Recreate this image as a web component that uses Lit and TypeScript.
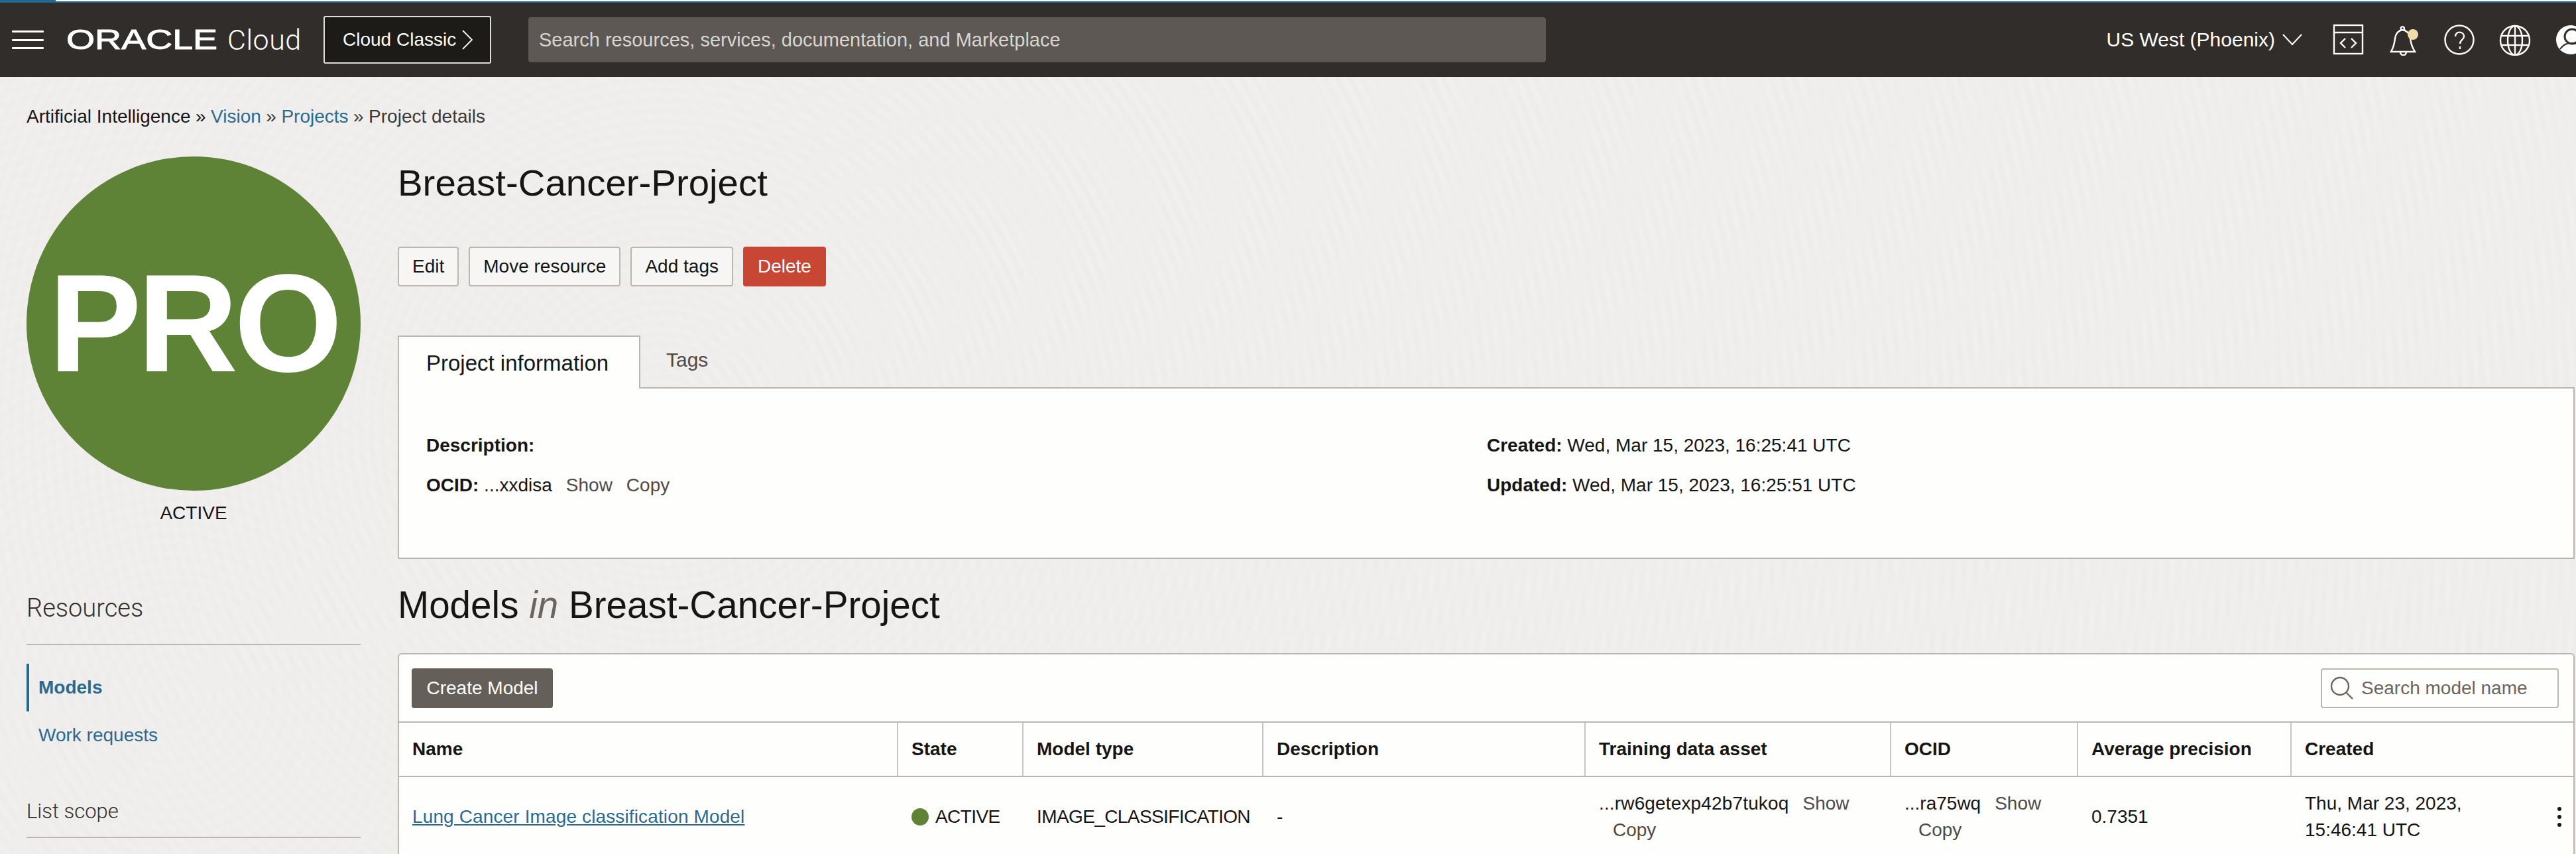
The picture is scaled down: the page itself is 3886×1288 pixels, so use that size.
import { LitElement, html, css, svg } from "lit";
import { customElement } from "lit/decorators.js";

const columns = [
  { label: "Name", width: 753 },
  { label: "State", width: 189 },
  { label: "Model type", width: 362 },
  { label: "Description", width: 486 },
  { label: "Training data asset", width: 461 },
  { label: "OCID", width: 282 },
  { label: "Average precision", width: 322 },
  { label: "Created", width: 427 },
];

const gridColumns = columns.map((c) => `${c.width}px`).join(" ");

const codeIcon = svg`<rect x="3" y="2" width="43" height="43" /><path d="M3 13h43M20 22l-7 7 7 7M29 22l7 7-7 7" />`;
const bellIcon = svg`<path d="M5 42c4-7 5-11 6-20 1-8 6-12 11-13 7 1 11 6 12 13 1 8 3 14 7 20ZM20 9c-2-6 6-7 5 0M19 42c0 7 9 7 9 0" /><circle cx="38" cy="16" r="8" fill="#f0dca8" stroke="none" />`;
const helpIcon = svg`<circle cx="24" cy="24" r="21.5" /><path d="M18 19c0-9 13-8 13 0 0 5-6 5-6 11" /><path d="M25 34v4" />`;
const globeIcon = svg`<circle cx="24" cy="25" r="22" /><ellipse cx="24" cy="25" rx="11" ry="22" /><path d="M24 3v44M3 18h42M3 32h42" />`;

@customElement("app-root")
export class AppRoot extends LitElement {
  static styles = css`
    :host {
      display: block;
      height: 1288px;
      overflow: hidden;
      color: #161513;
      font: 28px/40px "Liberation Sans", Arial, sans-serif;
      background-color: #f1f0ee;
      background-image:
        repeating-radial-gradient(circle at 1000px 640px, rgba(90, 85, 80, 0) 0, rgba(90, 85, 80, 0.014) 8px, rgba(90, 85, 80, 0) 16px),
        repeating-radial-gradient(circle at 260px 1050px, rgba(90, 85, 80, 0) 0, rgba(90, 85, 80, 0.012) 9px, rgba(90, 85, 80, 0) 18px);
    }
    a {
      color: #2b6a90;
      text-decoration: none;
    }

    .topline {
      height: 2px;
      background: #fff;
      border-bottom: 2px solid #236a93;
    }
    .topline i {
      display: block;
      width: 84px;
      height: 2px;
      background: #236a93;
    }

    .header {
      display: flex;
      align-items: center;
      height: 112px;
      margin-right: -16px;
      padding-left: 18px;
      background: #312d2a;
      color: #fff;
    }
    .burger {
      display: flex;
      flex-direction: column;
      gap: 9.5px;
      width: 48px;
      margin-right: 34px;
    }
    .burger i {
      height: 3px;
      background: #fff;
      border-radius: 1px;
    }
    .logo {
      flex: none;
      width: 229px;
      margin-right: 14px;
      font-size: 42px;
      line-height: 44px;
      white-space: nowrap;
    }
    .logo span {
      display: inline-block;
      transform: scaleX(1.32);
      transform-origin: left center;
      -webkit-text-stroke: 1px #fff;
    }
    .cloud {
      width: 145px;
      font: 300 43px/44px Roboto, "Liberation Sans", sans-serif;
      letter-spacing: 0.5px;
    }
    .classic {
      display: flex;
      align-items: center;
      box-sizing: border-box;
      width: 253px;
      height: 72px;
      padding-left: 27px;
      gap: 9px;
      background: #1c1b17;
      border: 2px solid #e0ddd8;
      border-radius: 3px;
    }
    .classic svg {
      width: 16px;
      height: 30px;
    }
    .search {
      box-sizing: border-box;
      width: 1535px;
      height: 68px;
      margin-left: 56px;
      padding-left: 16px;
      font-size: 29px;
      line-height: 68px;
      color: #d8d5d1;
      background: #5d5854;
      border-radius: 4px;
    }
    .right {
      display: flex;
      align-items: center;
      margin-left: auto;
      gap: 36px;
    }
    .region {
      display: flex;
      align-items: center;
      gap: 11px;
      margin-right: 9px;
      font-size: 30px;
    }
    .region svg {
      width: 30px;
      height: 18px;
    }
    .icon {
      display: block;
      width: 48px;
      height: 48px;
      fill: none;
      stroke: #fff;
      stroke-width: 2.4;
    }
    .icon.solid {
      stroke: none;
    }

    .crumbs {
      display: flex;
      gap: 7.5px;
      margin-top: 44px;
      padding-left: 40px;
      line-height: 32px;
    }
    .crumbs .sep,
    .crumbs .current {
      color: #3d3935;
    }

    .body {
      display: flex;
      margin-top: 44px;
    }
    .side {
      flex: none;
      width: 504px;
      margin-left: 40px;
      margin-right: 56px;
    }
    .avatar {
      display: flex;
      align-items: center;
      justify-content: center;
      height: 504px;
      border-radius: 50%;
      background: #5e8236;
      color: #fff;
      font-weight: bold;
      font-size: 210px;
      letter-spacing: -6px;
      line-height: 1;
    }
    .state {
      margin-top: 18px;
      line-height: 32px;
      text-align: center;
    }
    .side-title {
      font: 300 38px/40px Roboto, "Liberation Sans", sans-serif;
      color: #312d2a;
      padding-bottom: 34px;
      border-bottom: 2px solid #bcb6b1;
    }
    .side-title.first {
      margin-top: 107px;
    }
    .side-title.second {
      margin-top: 59px;
      font-size: 31px;
      padding-bottom: 18px;
    }
    .nav {
      margin-top: 28px;
    }
    .nav a {
      display: block;
      height: 72px;
      padding-left: 18px;
      line-height: 72px;
    }
    .nav a.on {
      padding-left: 14px;
      border-left: 4px solid #236a93;
      font-weight: bold;
    }

    .content {
      flex: 1;
      min-width: 0;
      margin-right: 2px;
    }
    h1 {
      margin: 8px 0 0;
      font-weight: normal;
      font-size: 56.4px;
      line-height: 64px;
    }
    .actions {
      display: flex;
      gap: 15px;
      margin-top: 64px;
    }
    .btn {
      box-sizing: border-box;
      height: 60px;
      padding: 0 20px;
      line-height: 56px;
      background: #f7f6f4;
      border: 2px solid #bcb6b1;
      border-radius: 4px;
    }
    .btn.danger {
      color: #fff;
      background: #c74634;
      border-color: #c74634;
    }

    .tabs {
      display: flex;
      align-items: center;
      box-sizing: border-box;
      height: 80px;
      margin-top: 74px;
      border-bottom: 2px solid #bcb6b1;
    }
    .tab {
      box-sizing: border-box;
      width: 366px;
      height: 80px;
      margin-bottom: -2px;
      padding-left: 41px;
      line-height: 80px;
      font-size: 33px;
      background: #fefefc;
      border: 2px solid #bcb6b1;
      border-bottom: none;
    }
    .tab-plain {
      margin-left: 39px;
      margin-top: -4px;
      font-size: 30px;
      color: #4f4a46;
    }
    .info {
      display: grid;
      grid-template-columns: 1600px 1fr;
      grid-auto-rows: 60px;
      box-sizing: border-box;
      height: 257px;
      padding: 56px 41px 0;
      line-height: 60px;
      background: #fefefc;
      border: 2px solid #bcb6b1;
      border-top: none;
    }
    .link-action {
      margin-left: 21px;
      color: #4f4a46;
    }

    h2 {
      margin: 38px 0 40px;
      font-weight: normal;
      font-size: 56.6px;
      line-height: 64px;
    }
    h2 em {
      color: #6b6560;
    }

    .card {
      box-sizing: border-box;
      height: 400px;
      background: #fefefc;
      border: 2px solid #bcb6b1;
      border-bottom: none;
      border-radius: 6px 6px 0 0;
    }
    .toolbar {
      display: flex;
      align-items: center;
      justify-content: space-between;
      height: 101px;
      padding: 0 22px 0 19px;
      border-bottom: 2px solid #bcb6b1;
    }
    .create {
      height: 60px;
      padding: 0 22.5px;
      line-height: 60px;
      color: #fff;
      background: #655f5a;
      border-radius: 4px;
    }
    .find {
      display: flex;
      align-items: center;
      box-sizing: border-box;
      width: 359px;
      height: 60px;
      padding-left: 12px;
      gap: 11px;
      color: #6b6560;
      border: 2px solid #bcb6b1;
      border-radius: 4px;
    }
    .find svg {
      width: 36px;
      height: 36px;
      fill: none;
      stroke: #6b6560;
      stroke-width: 2.4;
    }
    .row {
      display: grid;
    }
    .head {
      height: 80px;
      border-bottom: 2px solid #bcb6b1;
      font-weight: bold;
    }
    .head div {
      box-sizing: border-box;
      padding-left: 20px;
      line-height: 80px;
      border-right: 2px solid #c9c5c0;
    }
    .head div:last-child {
      border-right: none;
    }
    .cells {
      height: 120px;
    }
    .cells > div {
      display: flex;
      align-items: center;
      box-sizing: border-box;
      padding: 0 20px;
    }
    .cells a {
      text-decoration: underline;
      letter-spacing: 0.13px;
    }
    .cells .wrap {
      display: block;
    }
    .cells .asset {
      letter-spacing: 0.15px;
    }
    .caps {
      letter-spacing: -0.6px;
    }
    .dot {
      flex: none;
      width: 26px;
      height: 26px;
      margin-right: 10px;
      border-radius: 50%;
      background: #5e8236;
    }
    .date {
      flex: 1;
    }
    .kebab {
      display: flex;
      flex-direction: column;
      gap: 6px;
    }
    .kebab i {
      width: 6px;
      height: 6px;
      border-radius: 50%;
      background: #161513;
    }
  `;

  render() {
    return html`
      <div class="topline"><i></i></div>
      <header class="header">
        <div class="burger"><i></i><i></i><i></i></div>
        <div class="logo"><span>ORACLE</span></div>
        <div class="cloud">Cloud</div>
        <div class="classic">
          Cloud Classic
          <svg viewBox="0 0 16 30" fill="none" stroke="#fff" stroke-width="1.8"><path d="M1 1l14 14L1 29" /></svg>
        </div>
        <div class="search">Search resources, services, documentation, and Marketplace</div>
        <div class="right">
          <div class="region">
            US West (Phoenix)
            <svg viewBox="0 0 30 18" fill="none" stroke="#fff" stroke-width="2"><path d="M1 1l14 15L29 1" /></svg>
          </div>
          <svg class="icon" viewBox="0 0 48 48">${codeIcon}</svg>
          <svg class="icon" viewBox="0 0 48 48">${bellIcon}</svg>
          <svg class="icon" viewBox="0 0 48 48">${helpIcon}</svg>
          <svg class="icon" viewBox="0 0 48 48">${globeIcon}</svg>
          <svg class="icon solid" viewBox="0 0 48 48">
            <circle cx="24" cy="24" r="22" fill="#fff" />
            <circle cx="26" cy="19" r="11" fill="none" stroke="#312d2a" stroke-width="3" />
            <path d="M8 38c6-8 11-9 18-9s12 2 18 9" fill="none" stroke="#312d2a" stroke-width="2" />
          </svg>
        </div>
      </header>

      <nav class="crumbs">
        <span>Artificial Intelligence</span><span>»</span>
        <a>Vision</a><span class="sep">»</span>
        <a>Projects</a><span class="sep">»</span>
        <span class="current">Project details</span>
      </nav>

      <div class="body">
        <aside class="side">
          <div class="avatar">PRO</div>
          <div class="state">ACTIVE</div>
          <div class="side-title first">Resources</div>
          <div class="nav">
            <a class="on">Models</a>
            <a>Work requests</a>
          </div>
          <div class="side-title second">List scope</div>
        </aside>

        <main class="content">
          <h1>Breast-Cancer-Project</h1>
          <div class="actions">
            <div class="btn">Edit</div>
            <div class="btn">Move resource</div>
            <div class="btn">Add tags</div>
            <div class="btn danger">Delete</div>
          </div>
          <div class="tabs">
            <div class="tab">Project information</div>
            <div class="tab-plain">Tags</div>
          </div>
          <section class="info">
            <div><b>Description:</b></div>
            <div><b>Created:</b> Wed, Mar 15, 2023, 16:25:41 UTC</div>
            <div>
              <b>OCID:</b> ...xxdisa<span class="link-action">Show</span><span class="link-action">Copy</span>
            </div>
            <div><b>Updated:</b> Wed, Mar 15, 2023, 16:25:51 UTC</div>
          </section>

          <h2>Models <em>in</em> Breast-Cancer-Project</h2>
          <section class="card">
            <div class="toolbar">
              <div class="create">Create Model</div>
              <div class="find">
                <svg viewBox="0 0 36 36"><circle cx="15" cy="15" r="13" /><path d="M24 24l10 10" /></svg>
                Search model name
              </div>
            </div>
            <div class="row head" style="grid-template-columns:${gridColumns}">
              ${columns.map((c) => html`<div>${c.label}</div>`)}
            </div>
            <div class="row cells" style="grid-template-columns:${gridColumns}">
              <div><a>Lung Cancer Image classification Model</a></div>
              <div><span class="dot"></span><span class="caps">ACTIVE</span></div>
              <div><span class="caps">IMAGE_CLASSIFICATION</span></div>
              <div>-</div>
              <div>
                <span class="wrap"><span class="asset">...rw6getexp42b7tukoq</span><span class="link-action">Show</span> <span class="link-action">Copy</span></span>
              </div>
              <div>
                <span class="wrap">...ra75wq<span class="link-action">Show</span> <span class="link-action">Copy</span></span>
              </div>
              <div>0.7351</div>
              <div>
                <span class="date">Thu, Mar 23, 2023,<br />15:46:41 UTC</span>
                <span class="kebab"><i></i><i></i><i></i></span>
              </div>
            </div>
          </section>
        </main>
      </div>
    `;
  }
}
